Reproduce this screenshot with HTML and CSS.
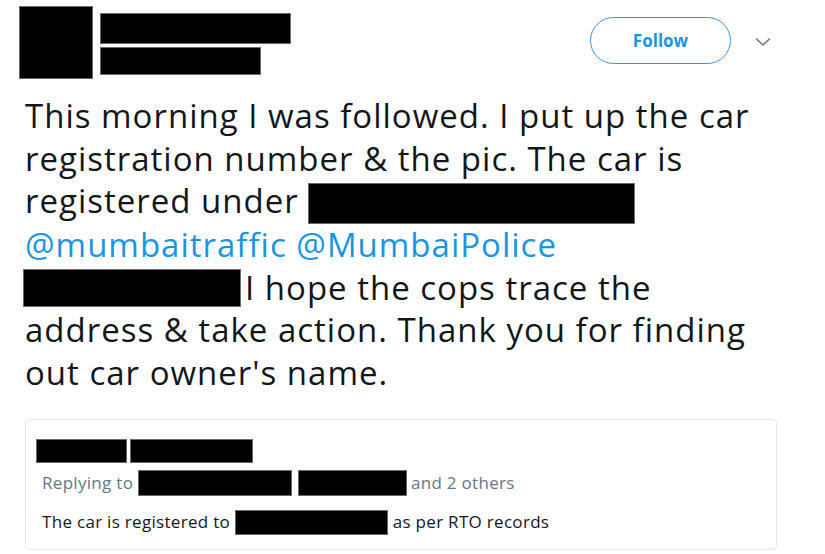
FILE: index.html
```html
<!DOCTYPE html>
<html lang="en">

<head>
    <meta charset="UTF-8">
    <meta name="viewport" content="width=device-width, initial-scale=1.0">
    <title>Tweet</title>
    <link rel="stylesheet" href="styles.css">
</head>

<body>
    <div class="tweet">
        <div class="head">
            <div class="avatar redact"></div>
            <div class="names">
                <div class="redact name"></div>
                <div class="redact handle"></div>
            </div>
            <button class="follow">Follow</button>
            <svg class="caret" width="16" height="10" viewBox="0 0 16 10">
                <path d="M1 1.5 L8 8 L15 1.5" fill="none" stroke="#657786" stroke-width="1.6"/>
            </svg>
        </div>

        <p class="text">
            This morning I was followed. I put up the car<br>
            registration number &amp; the pic. The car is<br>
            registered under <span class="redact inline r1"></span><br>
            <a class="mention">@mumbaitraffic</a> <a class="mention">@MumbaiPolice</a><br>
            <span class="redact inline r2"></span>I hope the cops trace the<br>
            address &amp; take action. Thank you for finding<br>
            out car owner's name.
        </p>

        <div class="quote">
            <div class="quote-user">
                <span class="redact q1"></span><span class="redact q2"></span>
            </div>
            <div class="replying">
                Replying to <span class="redact q3"></span><span class="redact q4"></span>and 2 others
            </div>
            <div class="quote-text">
                The car is registered to <span class="redact q5"></span>as per RTO records
            </div>
        </div>
    </div>
</body>

</html>
```

FILE: styles.css
```css
body {
    margin: 0;
    background: #fff;
    font-family: 'Open Sans', 'Noto Sans', sans-serif;
    color: #14171a;
}

.tweet {
    width: 825px;
    height: 554px;
    overflow: hidden;
}

.redact {
    background: #000;
    border: 1px solid #6b6b6b;
    box-sizing: border-box;
    display: inline-block;
}

.head {
    display: flex;
    align-items: flex-start;
    padding: 6px 0 0 19px;
}

.avatar {
    width: 74px;
    height: 73px;
}

.names {
    display: flex;
    flex-direction: column;
    gap: 3px;
    margin: 7px 0 0 7px;
}

.name {
    width: 191px;
    height: 31px;
}

.handle {
    width: 161px;
    height: 28px;
}

.follow {
    margin: 11px 0 0 299px;
    width: 141px;
    height: 47px;
    border: 1.5px solid #3b94d9;
    border-radius: 24px;
    background: #fff;
    color: #1b95e0;
    font-family: 'Open Sans', sans-serif;
    font-weight: 700;
    font-size: 17px;
}

.caret {
    margin: 31px 0 0 24px;
}

.text {
    margin: 16px 0 0 25px;
    font-size: 33px;
    line-height: 42.5px;
    letter-spacing: 1px;
}

.mention {
    color: #1b95e0;
}

.inline {
    height: 41px;
}

.r1 {
    width: 327px;
    vertical-align: -11px;
}

.r2 {
    width: 218px;
    height: 38px;
    vertical-align: -7px;
    margin-left: -2px;
    margin-right: 4px;
}

.quote {
    margin: 25px 0 0 25px;
    width: 752px;
    height: 131px;
    box-sizing: border-box;
    border: 1px solid #e1e8ed;
    border-radius: 5px;
    padding: 19px 0 0 10px;
    font-size: 17px;
    letter-spacing: 0.3px;
}

.quote-user {
    display: flex;
    gap: 3px;
}

.q1 {
    width: 91px;
    height: 24px;
}

.q2 {
    width: 123px;
    height: 24px;
}

.replying {
    color: #657786;
    margin: 7px 0 0 6px;
    height: 26px;
    line-height: 26px;
}

.replying .redact {
    height: 26px;
    vertical-align: -7px;
}

.q3 {
    width: 154px;
    margin-right: 6px;
}

.q4 {
    width: 109px;
    margin-right: 4px;
}

.quote-text {
    margin: 13px 0 0 6px;
    line-height: 25px;
}

.q5 {
    width: 153px;
    height: 25px;
    vertical-align: -7px;
    margin-right: 5px;
}
```
